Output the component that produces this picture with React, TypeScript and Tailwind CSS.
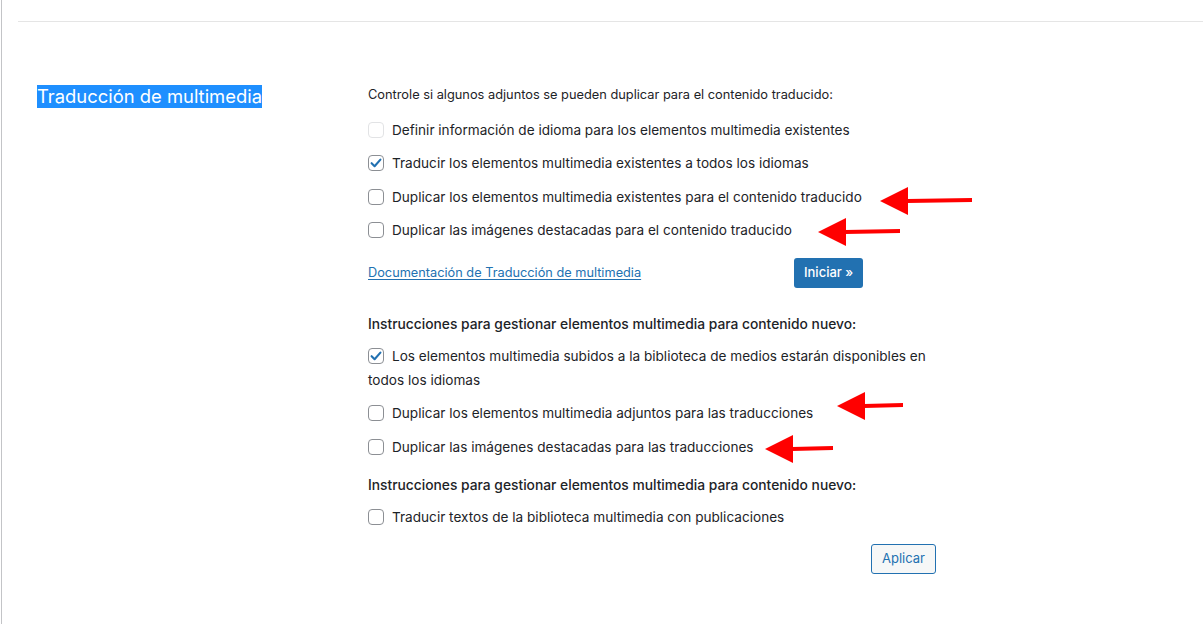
import React from 'react';

const font = { fontFamily: 'Inter, "Liberation Sans", sans-serif' };

function Box({ checked, disabled }: { checked?: boolean; disabled?: boolean }) {
    return (
        <span
            className={`inline-block w-4 h-4 mr-2 rounded-[4px] border bg-white align-[-3px] relative ${disabled ? 'border-[#e2e3e5]' : 'border-[#8c8f94]'}`}
        >
            {checked && (
                <svg viewBox="0 0 16 16" className="absolute -left-px -top-px w-4 h-4">
                    <path d="M3.6 8.2 L6.6 11.2 L12.4 4.6" fill="none" stroke="#2271b1" strokeWidth="2.1" strokeLinecap="round" strokeLinejoin="round" />
                </svg>
            )}
        </span>
    );
}

function Row({ mt, checked, disabled, children }: { mt: string; checked?: boolean; disabled?: boolean; children: React.ReactNode }) {
    return (
        <div className={`${mt} leading-6 text-[13.6px]`}>
            <Box checked={checked} disabled={disabled} />
            {children}
        </div>
    );
}

// annotation arrows drawn over the page
const arrows = [
    { tip: 880, y: 201, back: 908, end: 972 },
    { tip: 818, y: 232, back: 846, end: 900 },
    { tip: 837, y: 406, back: 865, end: 903 },
    { tip: 765, y: 449, back: 793, end: 833 },
];

export default function App() {
    return (
        <div className="relative w-[1203px] h-[624px] bg-white overflow-hidden text-[13px] text-[#1d2327]" style={font}>
            <div className="h-full ml-px border-l border-[#c3c4c7]">
                <div className="pt-[21px] ml-4 border-b border-[#e5e5e5]" />

                <div className="flex pt-[61px]">
                    <div className="w-[366px] pl-[35px] shrink-0">
                        <h2 className="mt-[2px] inline-block bg-[#1e8fff] text-white text-[18.4px] leading-[23px] font-normal">
                            Traducción de multimedia
                        </h2>
                    </div>

                    <div className="w-[568px] shrink-0">
                        <p className="leading-6 text-[12.8px]">Controle si algunos adjuntos se pueden duplicar para el contenido traducido:</p>
                        <Row mt="mt-[11px]" disabled>Definir información de idioma para los elementos multimedia existentes</Row>
                        <Row mt="mt-[9px]" checked>Traducir los elementos multimedia existentes a todos los idiomas</Row>
                        <Row mt="mt-[10px]">Duplicar los elementos multimedia existentes para el contenido traducido</Row>
                        <Row mt="mt-[9px]">Duplicar las imágenes destacadas para el contenido traducido</Row>

                        <div className="mt-4 flex items-center h-[30px]">
                            <a href="#" className="w-[426px] text-[12.75px] text-[#2271b1] underline underline-offset-2">
                                Documentación de Traducción de multimedia
                            </a>
                            <button className="h-[30px] px-[10px] rounded-[3px] bg-[#2271b1] text-white font-medium">
                                Iniciar »
                            </button>
                        </div>

                        <p className="mt-6 leading-6 text-[13.8px] font-medium">Instrucciones para gestionar elementos multimedia para contenido nuevo:</p>
                        <Row mt="mt-2" checked>Los elementos multimedia subidos a la biblioteca de medios estarán disponibles en todos los idiomas</Row>
                        <Row mt="mt-[9px]">Duplicar los elementos multimedia adjuntos para las traducciones</Row>
                        <Row mt="mt-[10px]">Duplicar las imágenes destacadas para las traducciones</Row>

                        <p className="mt-[14px] leading-6 text-[13.8px] font-medium">Instrucciones para gestionar elementos multimedia para contenido nuevo:</p>
                        <Row mt="mt-2">Traducir textos de la biblioteca multimedia con publicaciones</Row>

                        <div className="mt-[15px] flex justify-end">
                            <button className="h-[30px] px-[10px] rounded-[3px] border border-[#2271b1] bg-[#f6f7f7] text-[#2271b1]">
                                Aplicar
                            </button>
                        </div>
                    </div>
                </div>
            </div>

            <svg className="absolute left-0 top-0 pointer-events-none" width="1203" height="624">
                {arrows.map((a) => (
                    <g key={a.y} fill="#ff0000">
                        <polygon points={`${a.tip},${a.y} ${a.back},${a.y - 14} ${a.back},${a.y + 14}`} />
                        <polygon points={`${a.back - 1},${a.y - 2} ${a.end},${a.y - 3} ${a.end},${a.y + 1} ${a.back - 1},${a.y + 2}`} />
                    </g>
                ))}
            </svg>
        </div>
    );
}
